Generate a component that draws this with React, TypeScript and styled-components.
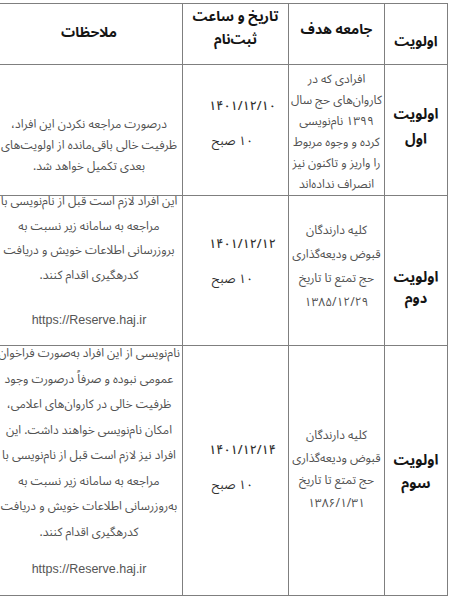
import { createGlobalStyle, styled } from "styled-components";

const GlobalStyle = createGlobalStyle`
  html, body {
    margin: 0;
    padding: 0;
    background: #ffffff;
    overflow: hidden;
  }
`;

const Table = styled.table`
  direction: rtl;
  border-collapse: collapse;
  table-layout: fixed;
  width: 452px;
  margin: 3px 2px 0 -5px;
  font-family: "Noto Sans Arabic", "DejaVu Sans", sans-serif;
  font-stretch: condensed;
  color: #525252;
`;

const Col = styled.col<{ $w: number }>`
  width: ${(p) => p.$w}px;
`;

const Row = styled.tr<{ $h: number }>`
  height: ${(p) => p.$h}px;
`;

const HeadCell = styled.th`
  border: 1px solid #7f7f7f;
  padding: 0;
  font-size: 14px;
  font-weight: bold;
  font-stretch: semi-condensed;
  color: #141414;
  line-height: 23px;
  text-align: center;
  vertical-align: top;
  white-space: nowrap;
`;

const Cell = styled.td`
  border: 1px solid #7f7f7f;
  padding: 0;
  font-size: 12px;
  text-align: center;
  vertical-align: top;
  white-space: nowrap;
`;

/* block inside a cell, shifted down from the row's top line */
const Block = styled.div<{ $top: number; $lh?: number }>`
  margin-top: ${(p) => p.$top}px;
  line-height: ${(p) => p.$lh ?? 23}px;
`;

const Label = styled(Block)`
  font-size: 14.5px;
  font-weight: bold;
  font-stretch: semi-condensed;
  color: #141414;
`;

const DateLine = styled.div<{ $gap: number }>`
  font-size: 12.5px;
  color: #303030;
  line-height: 23px;
  & + & {
    margin-top: ${(p) => p.$gap}px;
    padding-right: 6px;
  }
`;

const DateNum = styled(DateLine)`
  font-weight: 500;
  letter-spacing: -0.6px;
  padding-left: 14px;
`;

const Link = styled.div<{ $gap: number }>`
  margin-top: ${(p) => p.$gap}px;
  direction: ltr;
  font-family: "Liberation Sans", Arial, sans-serif;
  font-stretch: normal;
  font-size: 12.5px;
  line-height: 23px;
  color: #555555;
`;

type Priority = {
  label: string[];
  labelTop: number;
  labelLh: number;
  target: string[];
  targetTop: number;
  targetLh: number;
  date: string;
  dateTop: number;
  dateGap: number;
  notes: string[];
  notesTop: number;
  notesLh: number;
  linkGap?: number;
  height: number;
};

const rows: Priority[] = [
  {
    label: ["اولویت", "اول"],
    labelTop: 37,
    labelLh: 25,
    target: [
      "افرادی که در",
      "کاروان‌های حج سال",
      "۱۳۹۹ نام‌نویسی",
      "کرده و وجوه مربوط",
      "را واریز و تاکنون نیز",
      "انصراف نداده‌اند",
    ],
    targetTop: 4,
    targetLh: 21,
    date: "۱۴۰۱/۱۲/۱۰",
    dateTop: 30,
    dateGap: 14,
    notes: [
      "درصورت مراجعه نکردن این افراد،",
      "ظرفیت خالی باقی‌مانده از اولویت‌های",
      "بعدی تکمیل خواهد شد.",
    ],
    notesTop: 49,
    notesLh: 21,
    height: 130,
  },
  {
    label: ["اولویت", "دوم"],
    labelTop: 71,
    labelLh: 21,
    target: [
      "کلیه دارندگان",
      "قبوض ودیعه‌گذاری",
      "حج تمتع تا تاریخ",
      "۱۳۸۵/۱۲/۲۹",
    ],
    targetTop: 23,
    targetLh: 24,
    date: "۱۴۰۱/۱۲/۱۲",
    dateTop: 37,
    dateGap: 18,
    notes: [
      "این افراد لازم است قبل از نام‌نویسی با",
      "مراجعه به سامانه زیر نسبت به",
      "بروزرسانی اطلاعات خویش و دریافت",
      "کدرهگیری اقدام کنند.",
    ],
    notesTop: -6,
    notesLh: 24.5,
    linkGap: 21,
    height: 150,
  },
  {
    label: ["اولویت", "سوم"],
    labelTop: 103,
    labelLh: 23,
    target: [
      "کلیه دارندگان",
      "قبوض ودیعه‌گذاری",
      "حج تمتع تا تاریخ",
      "۱۳۸۶/۱/۳۱",
    ],
    targetTop: 79,
    targetLh: 22.5,
    date: "۱۴۰۱/۱۲/۱۴",
    dateTop: 93,
    dateGap: 12,
    notes: [
      "نام‌نویسی از این افراد به‌صورت فراخوان",
      "عمومی نبوده و صرفاً درصورت وجود",
      "ظرفیت خالی در کاروان‌های اعلامی،",
      "امکان نام‌نویسی خواهند داشت. این",
      "افراد نیز لازم است قبل از نام‌نویسی با",
      "مراجعه به سامانه زیر نسبت به",
      "به‌روزرسانی اطلاعات خویش و دریافت",
      "کدرهگیری اقدام کنند.",
    ],
    notesTop: -5,
    notesLh: 25.5,
    linkGap: 13,
    height: 250,
  },
];

const Lines = ({ lines }: { lines: string[] }) => (
  <>
    {lines.map((l) => (
      <div key={l}>{l}</div>
    ))}
  </>
);

export default function App() {
  return (
    <>
      <GlobalStyle />
      <Table>
        <colgroup>
          <Col $w={63} />
          <Col $w={96} />
          <Col $w={106} />
          <Col $w={187} />
        </colgroup>
        <tbody>
          <Row $h={61}>
            <HeadCell>
              <Block $top={26}>اولویت</Block>
            </HeadCell>
            <HeadCell>
              <Block $top={14}>جامعه هدف</Block>
            </HeadCell>
            <HeadCell>
              <Block $top={1}>
                <div>تاریخ و ساعت</div>
                <div>ثبت‌نام</div>
              </Block>
            </HeadCell>
            <HeadCell>
              <Block $top={17}>ملاحظات</Block>
            </HeadCell>
          </Row>
          {rows.map((r) => (
            <Row $h={r.height} key={r.date}>
              <Cell>
                <Label $top={r.labelTop} $lh={r.labelLh}>
                  <Lines lines={r.label} />
                </Label>
              </Cell>
              <Cell>
                <Block $top={r.targetTop} $lh={r.targetLh}>
                  <Lines lines={r.target} />
                </Block>
              </Cell>
              <Cell>
                <Block $top={r.dateTop}>
                  <DateNum $gap={r.dateGap}>{r.date}</DateNum>
                  <DateLine $gap={r.dateGap}>۱۰ صبح</DateLine>
                </Block>
              </Cell>
              <Cell>
                <Block $top={r.notesTop} $lh={r.notesLh}>
                  <Lines lines={r.notes} />
                  {r.linkGap !== undefined && (
                    <Link $gap={r.linkGap}>https://Reserve.haj.ir</Link>
                  )}
                </Block>
              </Cell>
            </Row>
          ))}
        </tbody>
      </Table>
    </>
  );
}
